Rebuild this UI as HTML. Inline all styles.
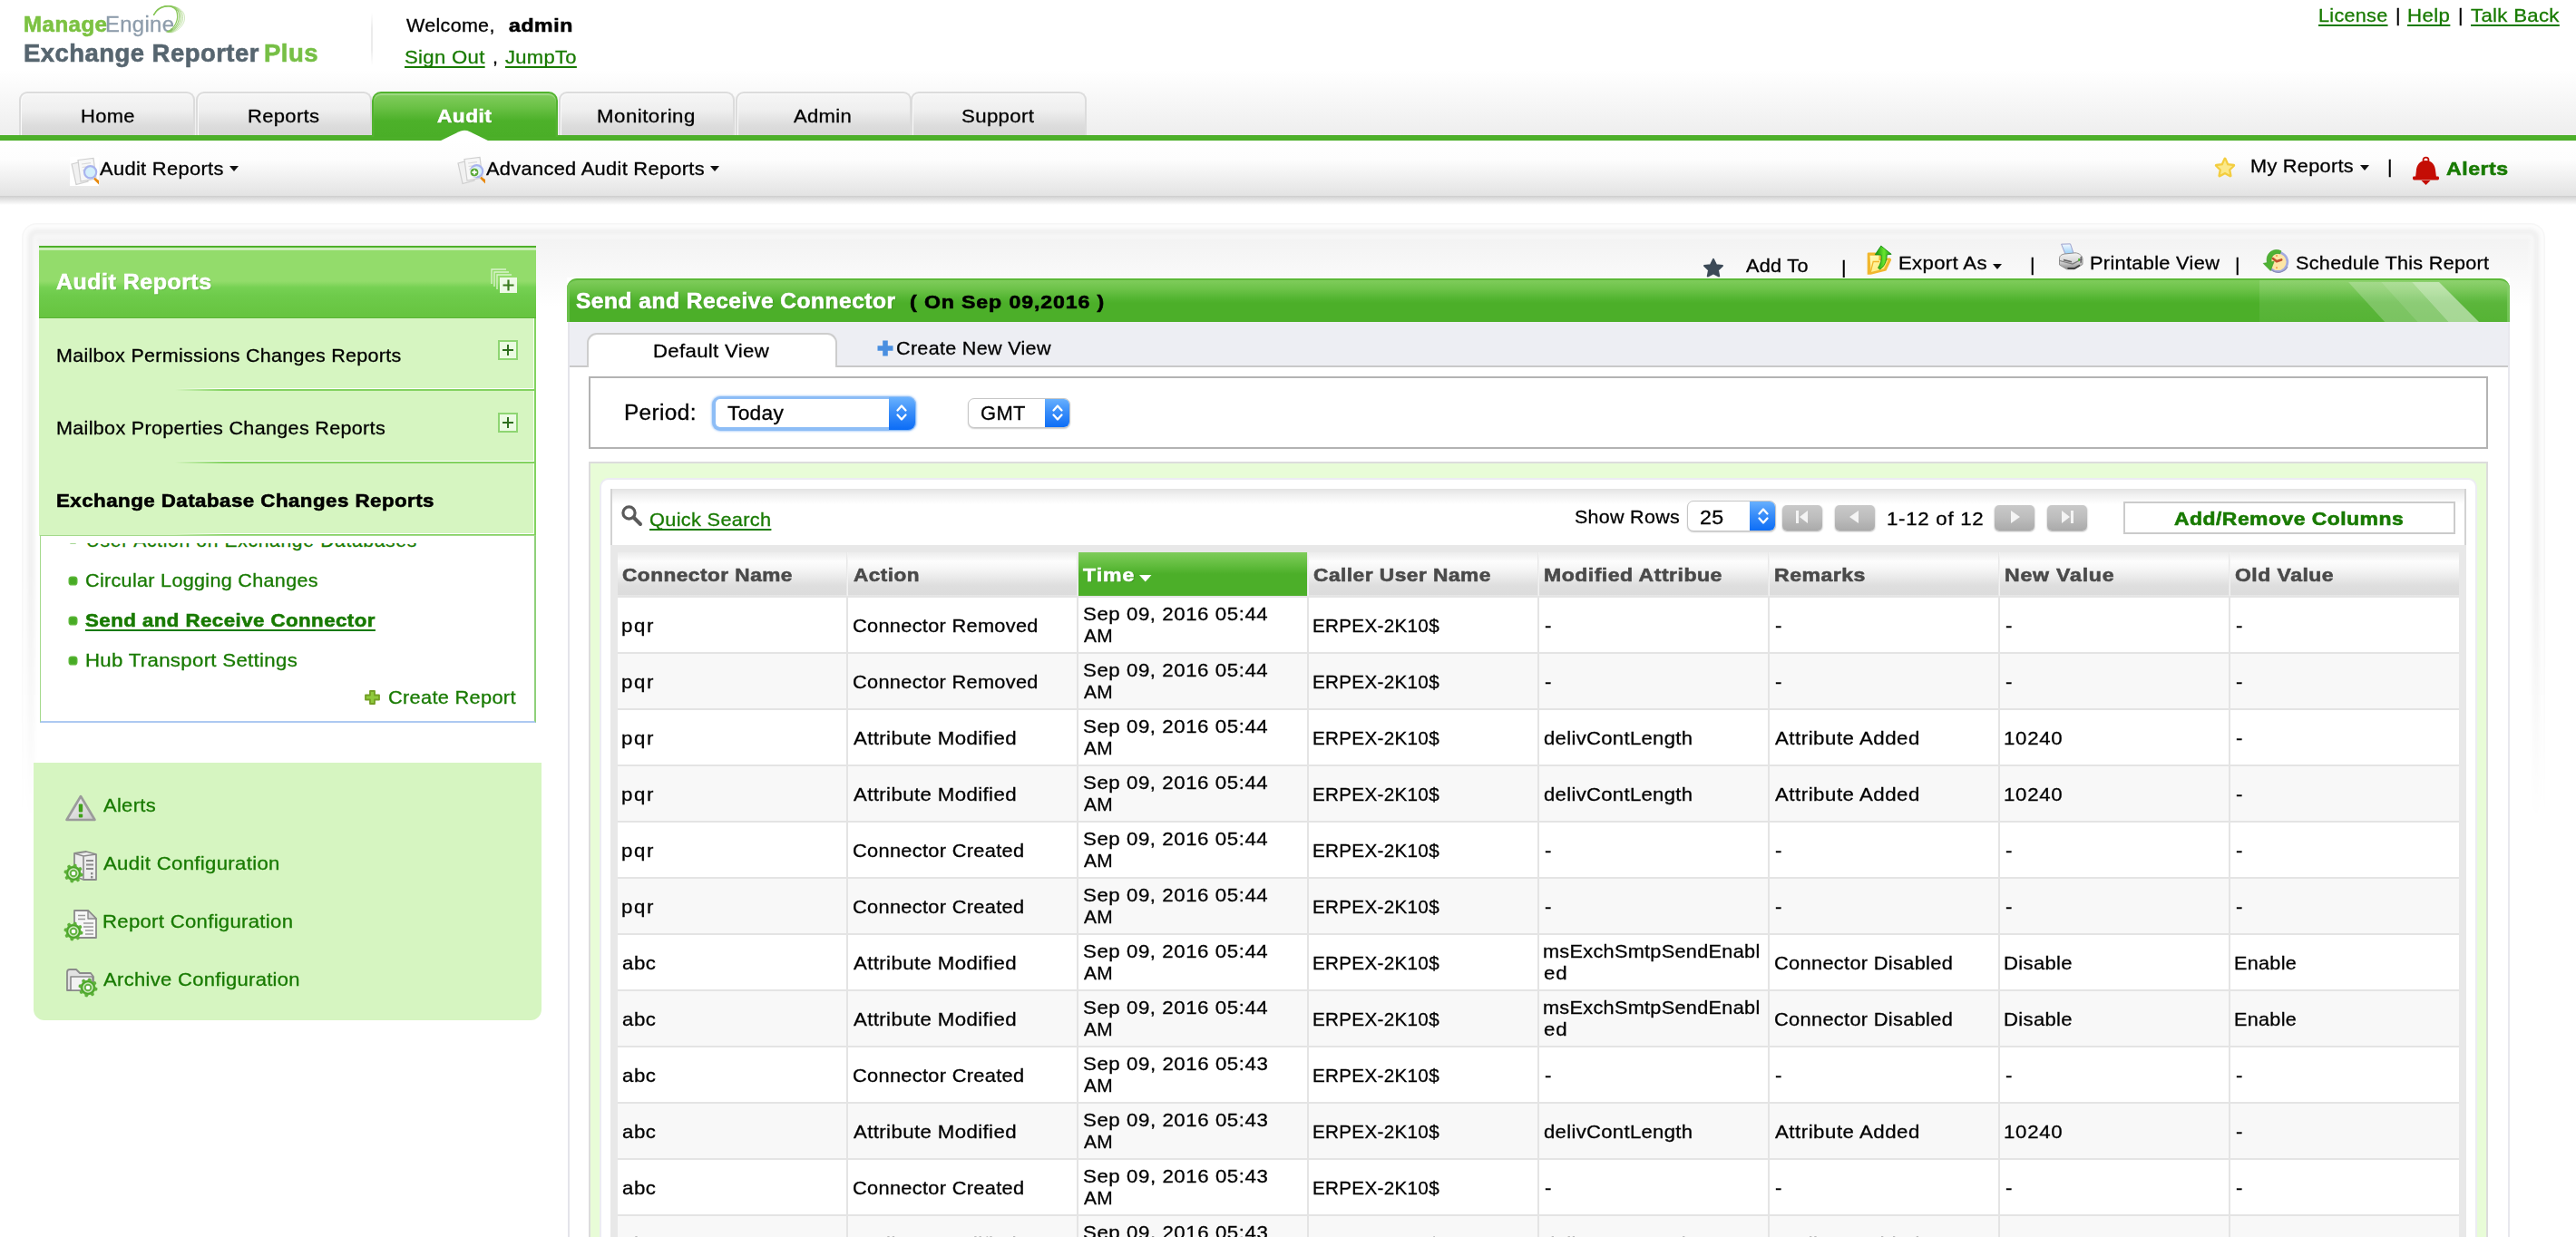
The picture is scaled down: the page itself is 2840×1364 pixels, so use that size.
<!DOCTYPE html>
<html><head><meta charset="utf-8"><title>Exchange Reporter Plus</title>
<style>
html,body{margin:0;padding:0;background:#fff;}
body{width:2840px;height:1364px;overflow:hidden;position:relative;font-family:"Liberation Sans",sans-serif;color:#000;}
.t{position:absolute;white-space:nowrap;transform-origin:0 50%;-webkit-text-stroke:0.3px;}
.b{position:absolute;box-sizing:border-box;}
.g{color:#187a00;}
.u{text-decoration:underline;text-decoration-thickness:2px;text-underline-offset:3px;text-decoration-skip-ink:none;}
svg{position:absolute;overflow:visible;}

.tab{position:absolute;top:101px;height:48px;box-sizing:border-box;border:2px solid #dcdcdc;border-bottom:none;border-radius:9px 9px 0 0;
 background:linear-gradient(#f6f6f6 0%,#efefef 40%,#dcdcdc 78%,#d7d7d7 100%);box-shadow:inset 1px 1px 0 #fafafa;}

</style></head><body>
<div class="b " style="left:0px;top:0px;width:2840px;height:149px;background:linear-gradient(#fff 0%,#fff 52%,#eeeeee 100%);"></div>
<div style="position:absolute;left:0;top:0;filter:blur(0.7px);">
<div class="t " style="left:25.8px;top:16.0px;font-size:23px;line-height:23px;letter-spacing:0.45px;transform:scaleX(1.0468);font-weight:bold;-webkit-text-stroke:0.6px;color:#7cc242;">Manage</div>
<div class="t " style="left:115.6px;top:16.0px;font-size:23px;line-height:23px;letter-spacing:0.30px;transform:scaleX(1.0391);color:#8d9cab;">Engine</div>
<div class="t " style="left:25.6px;top:46.0px;font-size:27px;line-height:27px;letter-spacing:0.45px;transform:scaleX(1.0180);font-weight:bold;-webkit-text-stroke:0.6px;color:#56656f;">Exchange Reporter</div>
<div class="t " style="left:291.3px;top:46.0px;font-size:27px;line-height:27px;letter-spacing:0.45px;transform:scaleX(1.0198);font-weight:bold;-webkit-text-stroke:0.6px;color:#76bf45;">Plus</div>
<svg style="left:165px;top:2px" width="46" height="38" viewBox="0 0 46 38"><g fill="none" stroke="#86c556" stroke-linecap="round"><path d="M4.5 14.5 C10 3.5 23.0 1.5 29.5 9.5 C33.0 19.0 28.0 30.0 19.0 33.2" stroke-width="1.30" opacity="0.95"/><path d="M4.5 14.5 C10 3.5 24.6 1.3 31.4 10.1 C35.2 19.5 29.6 30.4 20.2 33.4" stroke-width="1.18" opacity="0.83"/><path d="M4.5 14.5 C10 3.5 26.2 1.1 33.3 10.7 C37.4 20.0 31.2 30.8 21.4 33.6" stroke-width="1.06" opacity="0.71"/><path d="M4.5 14.5 C10 3.5 27.8 0.9 35.2 11.3 C39.6 20.5 32.8 31.2 22.6 33.8" stroke-width="0.94" opacity="0.59"/><path d="M4.5 14.5 C10 3.5 29.4 0.7 37.1 11.9 C41.8 21.0 34.4 31.6 23.8 34.0" stroke-width="0.82" opacity="0.47"/></g></svg>
</div>
<div class="b " style="left:409px;top:14px;width:2px;height:58px;background:linear-gradient(#fff,#ececec 30%,#ececec 70%,#fff);"></div>
<div class="t " style="left:448.4px;top:16.5px;font-size:21px;line-height:21px;letter-spacing:0.30px;transform:scaleX(1.0241);">Welcome,</div>
<div class="t " style="left:560.6px;top:16.5px;font-size:21px;line-height:21px;letter-spacing:0.52px;transform:scaleX(1.1000);font-weight:bold;-webkit-text-stroke:0.6px;">admin</div>
<div class="t u" style="left:446.3px;top:52.0px;font-size:21px;line-height:21px;letter-spacing:0.30px;transform:scaleX(1.0537);color:#187a00;">Sign Out</div>
<div class="t " style="left:542.9px;top:52.0px;font-size:21px;line-height:21px;letter-spacing:0.30px;transform:scaleX(1.0250);color:#000;">,</div>
<div class="t u" style="left:556.9px;top:52.0px;font-size:21px;line-height:21px;letter-spacing:0.30px;transform:scaleX(1.0468);color:#187a00;">JumpTo</div>
<div class="t u" style="left:2556.1px;top:6.4px;font-size:21px;line-height:21px;letter-spacing:0.30px;transform:scaleX(1.0273);color:#187a00;">License</div>
<div class="t " style="left:2640.9px;top:6.4px;font-size:21px;line-height:21px;letter-spacing:0.30px;transform:scaleX(1.0250);">|</div>
<div class="t u" style="left:2654.2px;top:6.4px;font-size:21px;line-height:21px;letter-spacing:0.37px;transform:scaleX(1.0600);color:#187a00;">Help</div>
<div class="t " style="left:2709.8px;top:6.4px;font-size:21px;line-height:21px;letter-spacing:0.30px;transform:scaleX(1.0250);">|</div>
<div class="t u" style="left:2724.1px;top:6.4px;font-size:21px;line-height:21px;letter-spacing:0.30px;transform:scaleX(1.0562);color:#187a00;">Talk Back</div>
<div class="tab" style="left:21px;width:194px"></div>
<div class="t " style="left:88.6px;top:116.8px;font-size:21px;line-height:21px;letter-spacing:0.30px;transform:scaleX(1.0452);">Home</div>
<div class="tab" style="left:215.5px;width:194px"></div>
<div class="t " style="left:272.6px;top:116.8px;font-size:21px;line-height:21px;letter-spacing:0.30px;transform:scaleX(1.0481);">Reports</div>
<div class="tab" style="left:616px;width:194px"></div>
<div class="t " style="left:658.3px;top:116.8px;font-size:21px;line-height:21px;letter-spacing:0.46px;transform:scaleX(1.0600);">Monitoring</div>
<div class="tab" style="left:810.5px;width:194px"></div>
<div class="t " style="left:875.2px;top:116.8px;font-size:21px;line-height:21px;letter-spacing:0.30px;transform:scaleX(1.0507);">Admin</div>
<div class="tab" style="left:1004px;width:194px"></div>
<div class="t " style="left:1059.9px;top:116.8px;font-size:21px;line-height:21px;letter-spacing:0.32px;transform:scaleX(1.0600);">Support</div>
<div class="b " style="left:0px;top:149px;width:2840px;height:6px;background:#4caf29;"></div>
<div class="b" style="left:410px;top:101px;width:205px;height:50px;border-radius:10px 10px 0 0;background:linear-gradient(#82cd5e 0%,#6cc247 30%,#4db12a 62%,#4aae27 100%);border:2px solid #52b32f;border-bottom:none;box-shadow:inset 0 2px 1px rgba(255,255,255,.25);"></div>
<div class="t " style="left:482.4px;top:116.8px;font-size:21px;line-height:21px;letter-spacing:0.45px;transform:scaleX(1.0785);font-weight:bold;-webkit-text-stroke:0.6px;color:#fff;text-shadow:0 1px 1px rgba(40,110,10,.6);">Audit</div>
<svg style="left:484px;top:143px" width="56" height="13" viewBox="0 0 56 13"><path d="M0 13 L22 2.2 Q28 -0.5 34 2.2 L56 13 Z" fill="#fff"/></svg>
<div class="b " style="left:0px;top:155px;width:2840px;height:61px;background:linear-gradient(#fff 0%,#fdfdfd 35%,#ededed 75%,#e3e3e3 100%);"></div>
<div class="b " style="left:0px;top:216px;width:2840px;height:10px;background:linear-gradient(#cdcdcd 0%,#dedede 30%,#f1f1f1 70%,#fff 100%);"></div>
<svg style="left:77px;top:173px" width="32" height="32" viewBox="0 0 32 32"><rect width="32" height="32" fill="#fff"/><g stroke="#cfcfcf" stroke-width="1.2" fill="#f1f1f1"><path d="M2 8 L15 4.5 L20 27 L7 30.5 Z"/><path d="M9 3.5 L26 1.5 L29 24 L12 27 Z" fill="#f7f7f7"/></g><g stroke="#d9d9d9" stroke-width="1.2"><path d="M13 8 L23 6.7"/><path d="M13.6 11.5 L22 10.4"/><path d="M14 15 L20 14.2"/></g><path d="M27 22.5 L32 26 L32 30.5 L26.5 25 Z" fill="#e8890c"/><circle cx="22.6" cy="16.8" r="6.6" fill="#d3effb" stroke="#a9b4ee" stroke-width="2.2"/></svg>
<div class="t " style="left:109.8px;top:174.5px;font-size:21px;line-height:21px;letter-spacing:0.30px;transform:scaleX(1.0423);">Audit Reports</div>
<svg style="left:253.3px;top:182.8px" width="10" height="6" viewBox="0 0 10 6"><path d="M0 0 H10 L5.0 6 Z" fill="#111"/></svg>
<svg style="left:503px;top:172px" width="32" height="32" viewBox="0 0 32 32"><g stroke="#cfcfcf" stroke-width="1.2" fill="#f1f1f1"><path d="M2 8 L15 4.5 L20 27 L7 30.5 Z"/><path d="M9 3.5 L26 1.5 L29 24 L12 27 Z" fill="#f7f7f7"/></g><g stroke="#d9d9d9" stroke-width="1.2"><path d="M13 8 L23 6.7"/><path d="M13.6 11.5 L22 10.4"/><path d="M14 15 L20 14.2"/></g><path d="M27 22.5 L32 26 L32 30.5 L26.5 25 Z" fill="#e8890c"/><circle cx="22.6" cy="16.8" r="6.6" fill="#d3effb" stroke="#a9b4ee" stroke-width="2.2"/><circle cx="20" cy="18" r="5" fill="#5aa83a" stroke="#fff" stroke-width="1"/><path d="M17.4 18 H22.6 M20 15.4 V20.6" stroke="#fff" stroke-width="1.8"/></svg>
<div class="t " style="left:536.2px;top:174.5px;font-size:21px;line-height:21px;letter-spacing:0.30px;transform:scaleX(1.0390);">Advanced Audit Reports</div>
<svg style="left:783px;top:182.8px" width="10" height="6" viewBox="0 0 10 6"><path d="M0 0 H10 L5.0 6 Z" fill="#111"/></svg>
<svg style="left:2440px;top:172px" width="26" height="25" viewBox="0 0 26 25"><path d="M13 3.2 L15.9 9.6 L22.6 10.4 L17.7 15.1 L19 21.8 L13 18.5 L7 21.8 L8.3 15.1 L3.4 10.4 L10.1 9.6 Z" fill="#fbe67e" stroke="#f3cd3f" stroke-width="3.2" stroke-linejoin="round"/><path d="M13 4.6 L15.4 10.3 L21.2 11 L17 15 L18 20.5 L13 17.7 L8 20.5 L9 15 L4.8 11 L10.6 10.3 Z" fill="#fbe98a"/></svg>
<div class="t " style="left:2480.6px;top:172.4px;font-size:21px;line-height:21px;letter-spacing:0.30px;transform:scaleX(1.0330);">My Reports</div>
<svg style="left:2601.6px;top:181.8px" width="10" height="6" viewBox="0 0 10 6"><path d="M0 0 H10 L5.0 6 Z" fill="#111"/></svg>
<div class="t " style="left:2631.6px;top:173.0px;font-size:21px;line-height:21px;letter-spacing:0.30px;transform:scaleX(1.0250);">|</div>
<svg style="left:2659px;top:172px" width="31" height="33" viewBox="0 0 31 33"><g fill="#c40d05"><circle cx="15.5" cy="4.6" r="3" fill="none" stroke="#c40d05" stroke-width="1.8"/><path d="M15.5 5 C8.5 5 5.2 10 4.8 17 L4 23.5 H27 L26.2 17 C25.8 10 22.5 5 15.5 5 Z"/><rect x="1" y="22.6" width="29" height="3.8" rx="1.4"/><path d="M10.5 27 H20.5 L15.5 32 Z"/></g></svg>
<div class="t " style="left:2696.8px;top:174.6px;font-size:21px;line-height:21px;letter-spacing:0.49px;transform:scaleX(1.1000);font-weight:bold;-webkit-text-stroke:0.6px;color:#187a00;">Alerts</div>
<div class="b" style="left:24px;top:246px;width:2782px;height:1150px;border-radius:16px;background:linear-gradient(#f1f1f1 0,#f2f2f2 12px,#f8f8f8 50px,#fff 92px);box-shadow:inset 0 0 0 1.5px #f6f6f6,inset 0 0 4px 7px #fcfcfc,inset 0 0 4px 12px #eeeeee,inset 0 0 4px 16px #f9f9f9,0 0 3px 1px #f8f8f8;-webkit-mask-image:linear-gradient(#000 0,#000 380px,transparent 660px);mask-image:linear-gradient(#000 0,#000 380px,transparent 660px);"></div>
<div class="b " style="left:43px;top:271px;width:548px;height:80px;background:linear-gradient(#4eb02a 0,#4eb02a 2px,#cdeebb 2px,#cdeebb 4.5px,#93dc6b 5.5px,#93dc6b 39px,#76d153 46px,#6ecb4b 55px,#66c43f 79px,#5ab535 79px,#5ab535 80px);"></div>
<div class="t " style="left:62.1px;top:299.8px;font-size:23px;line-height:23px;letter-spacing:0.45px;transform:scaleX(1.0866);font-weight:bold;-webkit-text-stroke:0.6px;color:#fff;text-shadow:1px 1px 1px #5fae3e;">Audit Reports</div>
<svg style="left:541px;top:296px" width="30" height="28" viewBox="0 0 30 28"><g fill="none" stroke="#d9f3cb" stroke-width="1.4"><path d="M1 17 V1 H17"/><path d="M4 20 V4 H20"/><path d="M7 23 V7 H23"/></g><rect x="10" y="10" width="19" height="17" fill="#eefae6"/><path d="M13.5 18.5 H25.5 M19.5 12.5 V24.5" stroke="#3a7a1e" stroke-width="2.2"/></svg>
<div class="b " style="left:43px;top:351px;width:548px;height:240px;background:#d6f5c1;border-right:2.5px solid #82d25f;"></div>
<div class="b " style="left:587.5px;top:351px;width:1px;height:237px;background:#f4fff0;"></div>
<div class="b " style="left:43px;top:427.5px;width:546px;height:1.5px;background:linear-gradient(90deg,rgba(255,255,255,0) 150px,#fff 205px,#fff 100%);"></div>
<div class="b " style="left:43px;top:429.0px;width:548px;height:1.5px;background:linear-gradient(90deg,rgba(130,210,95,0) 150px,#82d25f 205px,#82d25f 100%);"></div>
<div class="b " style="left:43px;top:507.5px;width:546px;height:1.5px;background:linear-gradient(90deg,rgba(255,255,255,0) 150px,#fff 205px,#fff 100%);"></div>
<div class="b " style="left:43px;top:509.0px;width:548px;height:1.5px;background:linear-gradient(90deg,rgba(130,210,95,0) 150px,#82d25f 205px,#82d25f 100%);"></div>
<div class="b " style="left:43px;top:587.5px;width:546px;height:1.5px;background:linear-gradient(90deg,rgba(255,255,255,0) 150px,#fff 205px,#fff 100%);"></div>
<div class="b " style="left:43px;top:589.0px;width:548px;height:1.5px;background:linear-gradient(90deg,rgba(130,210,95,0) 150px,#82d25f 205px,#82d25f 100%);"></div>
<div class="t " style="left:61.8px;top:380.8px;font-size:21px;line-height:21px;letter-spacing:0.30px;transform:scaleX(1.0223);">Mailbox Permissions Changes Reports</div>
<svg style="left:549px;top:375px" width="22" height="22" viewBox="0 0 22 22"><rect x="1" y="1" width="20" height="20" fill="#ebfbe2" stroke="#8ed572" stroke-width="2"/><path d="M5 11 H17 M11 5 V17" stroke="#2d6e1e" stroke-width="2"/></svg>
<div class="t " style="left:61.8px;top:460.6px;font-size:21px;line-height:21px;letter-spacing:0.30px;transform:scaleX(1.0272);">Mailbox Properties Changes Reports</div>
<svg style="left:549px;top:455px" width="22" height="22" viewBox="0 0 22 22"><rect x="1" y="1" width="20" height="20" fill="#ebfbe2" stroke="#8ed572" stroke-width="2"/><path d="M5 11 H17 M11 5 V17" stroke="#2d6e1e" stroke-width="2"/></svg>
<div class="t " style="left:62.4px;top:540.7px;font-size:21px;line-height:21px;letter-spacing:0.45px;transform:scaleX(1.0611);font-weight:bold;-webkit-text-stroke:0.6px;">Exchange Database Changes Reports</div>
<div class="b " style="left:44px;top:590px;width:547px;height:207px;background:#fff;border:1px solid #a3d98b;border-right:2px solid #8fd07a;border-bottom:2px solid #adc9f1;overflow:hidden;"></div>
<div class="b" style="left:45px;top:598.5px;width:545px;height:14px;overflow:hidden;">
<div class="t" style="left:49.7px;top:-13.6px;font-size:21px;line-height:21px;letter-spacing:0.7px;color:#187a00">User Action on Exchange Databases</div>
<svg style="left:30px;top:-9.5px" width="11" height="11" viewBox="0 0 11 11"><rect x=".5" y=".5" width="10" height="10" rx="3.5" fill="#4fb02c"/></svg>
</div>
<svg style="left:74.6px;top:634.6px" width="11" height="11" viewBox="0 0 11 11"><rect x=".5" y=".5" width="10" height="10" rx="3.6" fill="#5bb638"/><rect x="2" y="2" width="7" height="7" rx="2.6" fill="#48ab25"/></svg>
<div class="t " style="left:94.3px;top:628.8px;font-size:21px;line-height:21px;letter-spacing:0.30px;transform:scaleX(1.0274);color:#187a00;">Circular Logging Changes</div>
<svg style="left:74.6px;top:679.1px" width="11" height="11" viewBox="0 0 11 11"><rect x=".5" y=".5" width="10" height="10" rx="3.6" fill="#5bb638"/><rect x="2" y="2" width="7" height="7" rx="2.6" fill="#48ab25"/></svg>
<div class="t u" style="left:94.3px;top:672.8px;font-size:21px;line-height:21px;letter-spacing:0.45px;transform:scaleX(1.0583);font-weight:bold;-webkit-text-stroke:0.6px;color:#187a00;">Send and Receive Connector</div>
<svg style="left:74.6px;top:722.9px" width="11" height="11" viewBox="0 0 11 11"><rect x=".5" y=".5" width="10" height="10" rx="3.6" fill="#5bb638"/><rect x="2" y="2" width="7" height="7" rx="2.6" fill="#48ab25"/></svg>
<div class="t " style="left:94.3px;top:716.8px;font-size:21px;line-height:21px;letter-spacing:0.30px;transform:scaleX(1.0574);color:#187a00;">Hub Transport Settings</div>
<svg style="left:402px;top:761px" width="17" height="16" viewBox="0 0 17 16"><path d="M6 1 H11 V5.5 H16 V10.5 H11 V15 H6 V10.5 H1 V5.5 H6 Z" fill="#8fc93c" stroke="#739f24" stroke-width="1.8" stroke-linejoin="round"/></svg>
<div class="t " style="left:427.7px;top:758.0px;font-size:21px;line-height:21px;letter-spacing:0.30px;transform:scaleX(1.0368);color:#187a00;">Create Report</div>
<div class="b " style="left:37px;top:841px;width:560px;height:284px;background:#d6f5c1;border-radius:0 0 12px 12px;"></div>
<div class="t " style="left:113.8px;top:876.7px;font-size:21px;line-height:21px;letter-spacing:0.30px;transform:scaleX(1.0440);color:#187a00;">Alerts</div>
<div class="t " style="left:113.8px;top:940.9px;font-size:21px;line-height:21px;letter-spacing:0.30px;transform:scaleX(1.0567);color:#187a00;">Audit Configuration</div>
<div class="t " style="left:112.9px;top:1004.9px;font-size:21px;line-height:21px;letter-spacing:0.30px;transform:scaleX(1.0525);color:#187a00;">Report Configuration</div>
<div class="t " style="left:113.8px;top:1068.8px;font-size:21px;line-height:21px;letter-spacing:0.30px;transform:scaleX(1.0475);color:#187a00;">Archive Configuration</div>
<svg style="left:1876px;top:283px" width="26" height="24" viewBox="0 0 26 24"><path d="M13 1 L16.7 8.6 L25 9.7 L19 15.5 L20.5 23.5 L13 19.6 L5.5 23.5 L7 15.5 L1 9.7 L9.3 8.6 Z" fill="#3c4a57" stroke="#3c4a57" stroke-width="2.4" stroke-linejoin="round" transform="translate(2.2 2) scale(.83)"/></svg>
<div class="t " style="left:1924.9px;top:282.4px;font-size:21px;line-height:21px;letter-spacing:0.30px;transform:scaleX(1.0305);">Add To</div>
<div class="t " style="left:2030.1px;top:284.0px;font-size:21px;line-height:21px;letter-spacing:0.30px;transform:scaleX(1.0250);">|</div>
<div class="t " style="left:2092.6px;top:279.2px;font-size:21px;line-height:21px;letter-spacing:0.30px;transform:scaleX(1.0567);">Export As</div>
<svg style="left:2197px;top:291px" width="10" height="6" viewBox="0 0 10 6"><path d="M0 0 H10 L5.0 6 Z" fill="#111"/></svg>
<div class="t " style="left:2238.1px;top:280.5px;font-size:21px;line-height:21px;letter-spacing:0.30px;transform:scaleX(1.0250);">|</div>
<div class="t " style="left:2304.4px;top:279.0px;font-size:21px;line-height:21px;letter-spacing:0.30px;transform:scaleX(1.0371);">Printable View</div>
<div class="t " style="left:2463.6px;top:280.5px;font-size:21px;line-height:21px;letter-spacing:0.30px;transform:scaleX(1.0250);">|</div>
<div class="t " style="left:2531.0px;top:278.8px;font-size:21px;line-height:21px;letter-spacing:0.30px;transform:scaleX(1.0281);">Schedule This Report</div>
<svg style="left:2050px;top:262px;filter:blur(.45px)" width="50" height="50" viewBox="0 0 50 50"><defs><linearGradient id="ga" x1="0" y1="0" x2="1" y2="0"><stop offset="0" stop-color="#0c8f0c"/><stop offset=".55" stop-color="#69e52e"/><stop offset="1" stop-color="#149314"/></linearGradient><linearGradient id="fy" x1="0" y1="0" x2="1" y2="1"><stop offset="0" stop-color="#fffcc0"/><stop offset="1" stop-color="#ffe45e"/></linearGradient></defs><path d="M8.7 17.5 Q8.7 16.5 10 16.5 H17.5 L19.5 19.5 H24 V22.5 H34 L35.2 24.5 L29.5 36.5 L12.5 40.8 H8.7 Z" fill="#f1b72d"/><path d="M11.6 19.8 H21.5 V25 H31.5 L27 34.5 L12.6 38 Z" fill="url(#fy)"/><path d="M12.3 38.2 L15.2 26.5 H22" fill="none" stroke="#f1b72d" stroke-width="1.3"/><path d="M23.8 9.1 L35.2 18.3 L30.2 18.8 C30.4 26 27.2 32 22.6 35 L20.6 33.4 C23.6 29 24.6 24 24.1 19.2 L17.3 18.7 Z" fill="url(#ga)" stroke="#0b860b" stroke-width=".8" stroke-linejoin="round"/></svg>
<svg style="left:2260px;top:258px;filter:blur(.45px)" width="50" height="50" viewBox="0 0 50 50"><defs><linearGradient id="pp" x1="0" y1="0" x2="0" y2="1"><stop offset="0" stop-color="#f4f9ff"/><stop offset="1" stop-color="#8ccaf7"/></linearGradient><linearGradient id="pb" x1="0" y1="0" x2="0" y2="1"><stop offset="0" stop-color="#f4f4f4"/><stop offset=".55" stop-color="#d4d4d4"/><stop offset="1" stop-color="#8a8a8a"/></linearGradient></defs><path d="M12.6 11.2 L22.5 10.9 L26.5 22.5 L17.5 23.5 Z" fill="url(#pp)" stroke="#9aa0cc" stroke-width="1"/><path d="M10.5 26.5 C10.5 24 13 22.5 16 22 L28 20.8 C32 21 36 24 36 27.5 V33.5 L27 38.8 L18.5 38.8 L10.5 34 Z" fill="url(#pb)" stroke="#8f8f8f" stroke-width="1"/><path d="M10.8 29.5 L25 33 L35.6 27.6" fill="none" stroke="#7a7a7a" stroke-width="1.2"/><path d="M15 28.6 L24 30.8" stroke="#666" stroke-width="1.6"/><path d="M19.5 38 L27 38 L33 34.5" fill="none" stroke="#3f3f3f" stroke-width="1.8"/><path d="M33.5 25.5 L34.8 24.8 L34.8 31.5 L33.5 32.3 Z" fill="#555"/><rect x="31.2" y="27" width="1.8" height="3" fill="#56b13a"/></svg>
<svg style="left:2485px;top:265px;filter:blur(.45px)" width="50" height="50" viewBox="0 0 50 50"><circle cx="26.3" cy="23.8" r="10.6" fill="#fde6a6" stroke="#a4abdf" stroke-width="2.6"/><path d="M19 32.5 A11.8 11.8 0 0 0 37 29" fill="none" stroke="#8d8fb8" stroke-width="1.2"/><path d="M25 23.2 L20.8 20 M25 23.2 L30.2 21.4" stroke="#c2502c" stroke-width="2.6" stroke-linecap="round"/><circle cx="25" cy="17" r="1" fill="#f39a3c"/><circle cx="25" cy="30.2" r="1" fill="#f39a3c"/><path d="M30 11.8 C24 8.5 16.5 11.5 14.6 18 C13.9 20.5 14 22.6 14.5 24.6 L10.2 25.4 L18.2 33.6 L22.2 23.2 L19.2 23.8 C18.6 19.8 20 16.6 23 15.2 C25 14.3 27 14.3 28.6 15 Z" fill="#4fb233" stroke="#3a9a22" stroke-width=".6"/></svg>
<div class="b " style="left:625px;top:306px;width:2142px;height:50px;background:#fff;"></div>
<div class="b " style="left:625px;top:307px;width:2142px;height:48px;background:linear-gradient(#7fcc5b 0%,#6cc248 22%,#55b633 42%,#4caf29 55%,#4caf29 100%);border-radius:11px 11px 0 0;border-top:2px solid #5cb838;box-shadow:inset 3px 0 0 rgba(120,200,90,.7),inset -3px 0 0 rgba(120,200,90,.7);overflow:hidden;"><div style="position:absolute;left:1866px;top:0;width:276px;height:48px;background:linear-gradient(rgba(255,255,255,.12),rgba(255,255,255,.05));"></div><svg style="left:1964px;top:2px" width="170" height="46" viewBox="0 0 170 46"><path d="M0 0 H36 L78 46 H42 Z" fill="rgba(255,255,255,.22)"/><path d="M36 0 H70 L112 46 H78 Z" fill="rgba(255,255,255,.30)"/><path d="M70 0 H100 L146 46 H112 Z" fill="rgba(255,255,255,.48)"/></svg></div>
<div class="t " style="left:635.4px;top:320.7px;font-size:23px;line-height:23px;letter-spacing:0.45px;transform:scaleX(1.0685);font-weight:bold;-webkit-text-stroke:0.6px;color:#fff;text-shadow:1px 1px 1px #3d8f20;">Send and Receive Connector</div>
<div class="t " style="left:1003.3px;top:321.7px;font-size:21px;line-height:21px;letter-spacing:0.81px;transform:scaleX(1.1000);font-weight:bold;-webkit-text-stroke:0.6px;color:#000;">( On Sep 09,2016 )</div>
<div class="b " style="left:626px;top:355px;width:2141px;height:1100px;background:#fff;border-left:2px solid #e4e4ea;border-right:2px solid #e8e8ee;"></div>
<div class="b " style="left:628px;top:355px;width:2137px;height:50px;background:#edeef3;border-bottom:2px solid #c9c9c9;"></div>
<div class="b " style="left:647px;top:367px;width:276px;height:38px;background:#fff;border:2px solid #cdcdcd;border-bottom:none;border-radius:11px 11px 0 0;"></div>
<div class="t " style="left:719.6px;top:376.3px;font-size:21px;line-height:21px;letter-spacing:0.30px;transform:scaleX(1.0567);">Default View</div>
<svg style="left:967px;top:375px" width="18" height="18" viewBox="0 0 18 18"><path d="M6.2 0.5 H11.8 V6.2 H17.5 V11.8 H11.8 V17.5 H6.2 V11.8 H0.5 V6.2 H6.2 Z" fill="#4a8fe0"/></svg>
<div class="t " style="left:988.0px;top:372.8px;font-size:21px;line-height:21px;letter-spacing:0.30px;transform:scaleX(1.0266);">Create New View</div>
<div class="b " style="left:649px;top:415px;width:2094px;height:80px;background:#fff;border:2px solid #b3b3b3;"></div>
<div class="t " style="left:688.2px;top:443.8px;font-size:23px;line-height:23px;letter-spacing:0.34px;transform:scaleX(1.0600);">Period:</div>
<div class="b " style="left:785.0px;top:436.5px;width:225px;height:38px;background:#8dbdf6;border-radius:9px;box-shadow:0 0 2px 1px rgba(141,189,246,.6);"></div>
<div class="b " style="left:788.5px;top:440px;width:192px;height:31px;background:#fff;border-radius:5px 0 0 5px;"></div>
<div class="b " style="left:979.5px;top:436.5px;width:30.5px;height:38px;background:linear-gradient(#6ab2fe 0%,#3a8ef9 45%,#0b6cf6 100%);border-radius:0 9px 9px 0;border:1.5px solid #8dbdf6;border-left:none;"><svg style="left:7.0px;top:5.5px" width="14" height="24" viewBox="0 0 14 24"><path d="M2.5 9.5 L7 4.5 L11.5 9.5 M2.5 14.5 L7 19.5 L11.5 14.5" fill="none" stroke="#fff" stroke-width="2.3" stroke-linecap="round" stroke-linejoin="round"/></svg></div>
<div class="t " style="left:801.5px;top:444.7px;font-size:22px;line-height:22px;letter-spacing:0.30px;transform:scaleX(1.0328);">Today</div>
<div class="b " style="left:1066.5px;top:438.5px;width:113px;height:33px;background:#fff;border:1px solid #c6c6c6;border-radius:7px;box-shadow:0 1px 1.5px rgba(0,0,0,.2);overflow:hidden;"><div style="position:absolute;right:-1px;top:-1px;width:28px;height:33px;background:linear-gradient(#6ab2fe 0%,#3a8ef9 45%,#0b6cf6 100%);border-radius:0 7px 7px 0;"></div><svg style="right:6.0px;top:3.5px" width="14" height="24" viewBox="0 0 14 24"><path d="M2.5 9.5 L7 4.5 L11.5 9.5 M2.5 14.5 L7 19.5 L11.5 14.5" fill="none" stroke="#fff" stroke-width="2.3" stroke-linecap="round" stroke-linejoin="round"/></svg></div>
<div class="t " style="left:1080.8px;top:444.7px;font-size:22px;line-height:22px;letter-spacing:0.30px;transform:scaleX(0.9979);">GMT</div>
<div class="b " style="left:649px;top:509px;width:2094px;height:900px;background:#e8fcd7;border:2px solid #dcdcdc;"></div>
<div class="b " style="left:661px;top:527px;width:2070px;height:900px;background:#fff;border:2px solid #ececf3;border-radius:10px 10px 0 0;"></div>
<div class="b " style="left:673px;top:539px;width:2046px;height:900px;background:#e8e8e8;"></div>
<div class="b " style="left:673px;top:539px;width:2046px;height:62px;background:linear-gradient(#e3e3e3 0,#f1f1f1 7px,#fff 17px);border:2px solid #d2d2d2;border-bottom:none;border-top:none;"></div>
<svg style="left:684px;top:556px" width="25" height="25" viewBox="0 0 25 25"><circle cx="9.5" cy="9.5" r="6.6" fill="#fff" stroke="#5a5a5a" stroke-width="3.2"/><path d="M14.5 14.5 L22 22" stroke="#5a5a5a" stroke-width="4" stroke-linecap="round"/></svg>
<div class="t u" style="left:715.7px;top:562.3px;font-size:21px;line-height:21px;letter-spacing:0.30px;transform:scaleX(1.0366);color:#187a00;">Quick Search</div>
<div class="t " style="left:1735.8px;top:558.9px;font-size:21px;line-height:21px;letter-spacing:0.30px;transform:scaleX(1.0210);">Show Rows</div>
<div class="b " style="left:1860px;top:552px;width:98px;height:34px;background:#fff;border:1px solid #c6c6c6;border-radius:7px;box-shadow:0 1px 1.5px rgba(0,0,0,.2);overflow:hidden;"><div style="position:absolute;right:-1px;top:-1px;width:29px;height:34px;background:linear-gradient(#6ab2fe 0%,#3a8ef9 45%,#0b6cf6 100%);border-radius:0 7px 7px 0;"></div><svg style="right:6.5px;top:4.0px" width="14" height="24" viewBox="0 0 14 24"><path d="M2.5 9.5 L7 4.5 L11.5 9.5 M2.5 14.5 L7 19.5 L11.5 14.5" fill="none" stroke="#fff" stroke-width="2.3" stroke-linecap="round" stroke-linejoin="round"/></svg></div>
<div class="t " style="left:1874.3px;top:559.5px;font-size:22px;line-height:22px;letter-spacing:0.30px;transform:scaleX(1.0526);">25</div>
<div class="b" style="left:1964.8px;top:557px;width:44px;height:27.5px;border-radius:5px;background:linear-gradient(#c9c9c9,#bdbdbd 50%,#aaaaaa);box-shadow:0 1px 2px rgba(0,0,0,.35);"><svg style="left:12px;top:5px" width="20" height="16" viewBox="0 0 20 16" fill="#f4f4f4"><rect x="3" y="1" width="3" height="14"/><path d="M16 1 V15 L7 8 Z"/></svg></div>
<div class="b" style="left:2022.6px;top:557px;width:44px;height:27.5px;border-radius:5px;background:linear-gradient(#c9c9c9,#bdbdbd 50%,#aaaaaa);box-shadow:0 1px 2px rgba(0,0,0,.35);"><svg style="left:12px;top:5px" width="20" height="16" viewBox="0 0 20 16" fill="#f4f4f4"><path d="M14 1 V15 L4 8 Z"/></svg></div>
<div class="t " style="left:2080.2px;top:561.0px;font-size:21px;line-height:21px;letter-spacing:0.67px;transform:scaleX(1.0600);">1-12 of 12</div>
<div class="b" style="left:2198.6px;top:557px;width:44px;height:27.5px;border-radius:5px;background:linear-gradient(#c9c9c9,#bdbdbd 50%,#aaaaaa);box-shadow:0 1px 2px rgba(0,0,0,.35);"><svg style="left:12px;top:5px" width="20" height="16" viewBox="0 0 20 16" fill="#f4f4f4"><path d="M6 1 V15 L16 8 Z"/></svg></div>
<div class="b" style="left:2256.8px;top:557px;width:44px;height:27.5px;border-radius:5px;background:linear-gradient(#c9c9c9,#bdbdbd 50%,#aaaaaa);box-shadow:0 1px 2px rgba(0,0,0,.35);"><svg style="left:12px;top:5px" width="20" height="16" viewBox="0 0 20 16" fill="#f4f4f4"><rect x="14" y="1" width="3" height="14"/><path d="M4 1 V15 L13 8 Z"/></svg></div>
<div class="b " style="left:2340.5px;top:552.5px;width:366.5px;height:36px;background:#fff;border:2px solid #cbcbcb;"></div>
<div class="t " style="left:2397.4px;top:561.0px;font-size:21px;line-height:21px;letter-spacing:0.45px;transform:scaleX(1.0906);font-weight:bold;-webkit-text-stroke:0.6px;color:#187a00;">Add/Remove Columns</div>
<div class="b " style="left:680.5px;top:609px;width:2030.5px;height:48px;background:linear-gradient(#ececec 0,#fdfdfd 10px,#f4f4f4 20px,#dedede 37px,#dcdcdc 47px,#f1f1f1 48px);"></div>
<div class="t " style="left:686.4px;top:623.0px;font-size:21px;line-height:21px;letter-spacing:0.45px;transform:scaleX(1.0780);font-weight:bold;-webkit-text-stroke:0.6px;color:#4a4a4a;">Connector Name</div>
<div class="b " style="left:933px;top:609px;width:2px;height:48px;background:linear-gradient(90deg,#e4e4e4,#f6f6f6);"></div>
<div class="t " style="left:940.7px;top:623.0px;font-size:21px;line-height:21px;letter-spacing:0.45px;transform:scaleX(1.0722);font-weight:bold;-webkit-text-stroke:0.6px;color:#4a4a4a;">Action</div>
<div class="b " style="left:1187px;top:609px;width:2px;height:48px;background:linear-gradient(90deg,#e4e4e4,#f6f6f6);"></div>
<div class="b " style="left:1189px;top:609px;width:252px;height:48px;background:linear-gradient(#7fcc5b 0%,#66bf42 25%,#4caf29 50%,#4caf29 100%);"></div>
<div class="t " style="left:1193.9px;top:622.8px;font-size:21px;line-height:21px;letter-spacing:0.90px;transform:scaleX(1.1000);font-weight:bold;-webkit-text-stroke:0.6px;color:#fff;text-shadow:1px 1px 1px #3d8f20;">Time</div>
<svg style="left:1255.5px;top:633.6px" width="13.5" height="7.4" viewBox="0 0 13.5 7.4"><path d="M0 0 H13.5 L6.75 7.4 Z" fill="#fff"/></svg>
<div class="b " style="left:1441px;top:609px;width:2px;height:48px;background:linear-gradient(90deg,#e4e4e4,#f6f6f6);"></div>
<div class="t " style="left:1448.4px;top:623.0px;font-size:21px;line-height:21px;letter-spacing:0.45px;transform:scaleX(1.0817);font-weight:bold;-webkit-text-stroke:0.6px;color:#4a4a4a;">Caller User Name</div>
<div class="b " style="left:1695px;top:609px;width:2px;height:48px;background:linear-gradient(90deg,#e4e4e4,#f6f6f6);"></div>
<div class="t " style="left:1701.6px;top:623.0px;font-size:21px;line-height:21px;letter-spacing:0.45px;transform:scaleX(1.0964);font-weight:bold;-webkit-text-stroke:0.6px;color:#4a4a4a;">Modified Attribue</div>
<div class="b " style="left:1949px;top:609px;width:2px;height:48px;background:linear-gradient(90deg,#e4e4e4,#f6f6f6);"></div>
<div class="t " style="left:1955.6px;top:623.0px;font-size:21px;line-height:21px;letter-spacing:0.45px;transform:scaleX(1.0984);font-weight:bold;-webkit-text-stroke:0.6px;color:#4a4a4a;">Remarks</div>
<div class="b " style="left:2203px;top:609px;width:2px;height:48px;background:linear-gradient(90deg,#e4e4e4,#f6f6f6);"></div>
<div class="t " style="left:2209.6px;top:623.0px;font-size:21px;line-height:21px;letter-spacing:0.72px;transform:scaleX(1.1000);font-weight:bold;-webkit-text-stroke:0.6px;color:#4a4a4a;">New Value</div>
<div class="b " style="left:2457px;top:609px;width:2px;height:48px;background:linear-gradient(90deg,#e4e4e4,#f6f6f6);"></div>
<div class="t " style="left:2464.4px;top:623.0px;font-size:21px;line-height:21px;letter-spacing:0.45px;transform:scaleX(1.0935);font-weight:bold;-webkit-text-stroke:0.6px;color:#4a4a4a;">Old Value</div>
<div class="b " style="left:680.5px;top:656.5px;width:2030.5px;height:62px;background:#fff;border-top:2px solid #e4e4e4;"></div>
<div class="b " style="left:933px;top:656.5px;width:2px;height:62px;background:#e4e4e4;"></div>
<div class="b " style="left:1187px;top:656.5px;width:2px;height:62px;background:#e4e4e4;"></div>
<div class="b " style="left:1441px;top:656.5px;width:2px;height:62px;background:#e4e4e4;"></div>
<div class="b " style="left:1695px;top:656.5px;width:2px;height:62px;background:#e4e4e4;"></div>
<div class="b " style="left:1949px;top:656.5px;width:2px;height:62px;background:#e4e4e4;"></div>
<div class="b " style="left:2203px;top:656.5px;width:2px;height:62px;background:#e4e4e4;"></div>
<div class="b " style="left:2457px;top:656.5px;width:2px;height:62px;background:#e4e4e4;"></div>
<div class="t " style="left:685.3px;top:678.5px;font-size:21px;line-height:21px;letter-spacing:1.52px;transform:scaleX(1.0600);color:#000;">pqr</div>
<div class="t " style="left:939.6px;top:678.5px;font-size:21px;line-height:21px;letter-spacing:0.30px;transform:scaleX(1.0356);color:#000;">Connector Removed</div>
<div class="t " style="left:1193.5px;top:665.8px;font-size:21px;line-height:21px;letter-spacing:0.52px;transform:scaleX(1.0600);color:#000;">Sep 09, 2016 05:44</div>
<div class="t " style="left:1194.6px;top:689.8px;font-size:21px;line-height:21px;letter-spacing:0.30px;transform:scaleX(0.9950);color:#000;">AM</div>
<div class="t " style="left:1446.9px;top:678.5px;font-size:21px;line-height:21px;letter-spacing:0.30px;transform:scaleX(0.9839);color:#000;">ERPEX-2K10$</div>
<div class="t " style="left:1702.7px;top:678.5px;font-size:21px;line-height:21px;letter-spacing:2.55px;transform:scaleX(1.0600);color:#000;">-</div>
<div class="t " style="left:1956.7px;top:678.5px;font-size:21px;line-height:21px;letter-spacing:2.55px;transform:scaleX(1.0600);color:#000;">-</div>
<div class="t " style="left:2210.7px;top:678.5px;font-size:21px;line-height:21px;letter-spacing:2.55px;transform:scaleX(1.0600);color:#000;">-</div>
<div class="t " style="left:2464.7px;top:678.5px;font-size:21px;line-height:21px;letter-spacing:2.55px;transform:scaleX(1.0600);color:#000;">-</div>
<div class="b " style="left:680.5px;top:718.5px;width:2030.5px;height:62px;background:#f8f8f8;border-top:2px solid #e4e4e4;"></div>
<div class="b " style="left:933px;top:718.5px;width:2px;height:62px;background:#e4e4e4;"></div>
<div class="b " style="left:1187px;top:718.5px;width:2px;height:62px;background:#e4e4e4;"></div>
<div class="b " style="left:1441px;top:718.5px;width:2px;height:62px;background:#e4e4e4;"></div>
<div class="b " style="left:1695px;top:718.5px;width:2px;height:62px;background:#e4e4e4;"></div>
<div class="b " style="left:1949px;top:718.5px;width:2px;height:62px;background:#e4e4e4;"></div>
<div class="b " style="left:2203px;top:718.5px;width:2px;height:62px;background:#e4e4e4;"></div>
<div class="b " style="left:2457px;top:718.5px;width:2px;height:62px;background:#e4e4e4;"></div>
<div class="t " style="left:685.3px;top:740.5px;font-size:21px;line-height:21px;letter-spacing:1.52px;transform:scaleX(1.0600);color:#000;">pqr</div>
<div class="t " style="left:939.6px;top:740.5px;font-size:21px;line-height:21px;letter-spacing:0.30px;transform:scaleX(1.0356);color:#000;">Connector Removed</div>
<div class="t " style="left:1193.5px;top:727.8px;font-size:21px;line-height:21px;letter-spacing:0.52px;transform:scaleX(1.0600);color:#000;">Sep 09, 2016 05:44</div>
<div class="t " style="left:1194.6px;top:751.8px;font-size:21px;line-height:21px;letter-spacing:0.30px;transform:scaleX(0.9950);color:#000;">AM</div>
<div class="t " style="left:1446.9px;top:740.5px;font-size:21px;line-height:21px;letter-spacing:0.30px;transform:scaleX(0.9839);color:#000;">ERPEX-2K10$</div>
<div class="t " style="left:1702.7px;top:740.5px;font-size:21px;line-height:21px;letter-spacing:2.55px;transform:scaleX(1.0600);color:#000;">-</div>
<div class="t " style="left:1956.7px;top:740.5px;font-size:21px;line-height:21px;letter-spacing:2.55px;transform:scaleX(1.0600);color:#000;">-</div>
<div class="t " style="left:2210.7px;top:740.5px;font-size:21px;line-height:21px;letter-spacing:2.55px;transform:scaleX(1.0600);color:#000;">-</div>
<div class="t " style="left:2464.7px;top:740.5px;font-size:21px;line-height:21px;letter-spacing:2.55px;transform:scaleX(1.0600);color:#000;">-</div>
<div class="b " style="left:680.5px;top:780.5px;width:2030.5px;height:62px;background:#fff;border-top:2px solid #e4e4e4;"></div>
<div class="b " style="left:933px;top:780.5px;width:2px;height:62px;background:#e4e4e4;"></div>
<div class="b " style="left:1187px;top:780.5px;width:2px;height:62px;background:#e4e4e4;"></div>
<div class="b " style="left:1441px;top:780.5px;width:2px;height:62px;background:#e4e4e4;"></div>
<div class="b " style="left:1695px;top:780.5px;width:2px;height:62px;background:#e4e4e4;"></div>
<div class="b " style="left:1949px;top:780.5px;width:2px;height:62px;background:#e4e4e4;"></div>
<div class="b " style="left:2203px;top:780.5px;width:2px;height:62px;background:#e4e4e4;"></div>
<div class="b " style="left:2457px;top:780.5px;width:2px;height:62px;background:#e4e4e4;"></div>
<div class="t " style="left:685.3px;top:802.5px;font-size:21px;line-height:21px;letter-spacing:1.52px;transform:scaleX(1.0600);color:#000;">pqr</div>
<div class="t " style="left:940.6px;top:802.5px;font-size:21px;line-height:21px;letter-spacing:0.35px;transform:scaleX(1.0600);color:#000;">Attribute Modified</div>
<div class="t " style="left:1193.5px;top:789.8px;font-size:21px;line-height:21px;letter-spacing:0.52px;transform:scaleX(1.0600);color:#000;">Sep 09, 2016 05:44</div>
<div class="t " style="left:1194.6px;top:813.8px;font-size:21px;line-height:21px;letter-spacing:0.30px;transform:scaleX(0.9950);color:#000;">AM</div>
<div class="t " style="left:1446.9px;top:802.5px;font-size:21px;line-height:21px;letter-spacing:0.30px;transform:scaleX(0.9839);color:#000;">ERPEX-2K10$</div>
<div class="t " style="left:1701.8px;top:802.5px;font-size:21px;line-height:21px;letter-spacing:0.30px;transform:scaleX(1.0514);color:#000;">delivContLength</div>
<div class="t " style="left:1956.6px;top:802.5px;font-size:21px;line-height:21px;letter-spacing:0.48px;transform:scaleX(1.0600);color:#000;">Attribute Added</div>
<div class="t " style="left:2209.0px;top:802.5px;font-size:21px;line-height:21px;letter-spacing:0.65px;transform:scaleX(1.0600);color:#000;">10240</div>
<div class="t " style="left:2464.7px;top:802.5px;font-size:21px;line-height:21px;letter-spacing:2.55px;transform:scaleX(1.0600);color:#000;">-</div>
<div class="b " style="left:680.5px;top:842.5px;width:2030.5px;height:62px;background:#f8f8f8;border-top:2px solid #e4e4e4;"></div>
<div class="b " style="left:933px;top:842.5px;width:2px;height:62px;background:#e4e4e4;"></div>
<div class="b " style="left:1187px;top:842.5px;width:2px;height:62px;background:#e4e4e4;"></div>
<div class="b " style="left:1441px;top:842.5px;width:2px;height:62px;background:#e4e4e4;"></div>
<div class="b " style="left:1695px;top:842.5px;width:2px;height:62px;background:#e4e4e4;"></div>
<div class="b " style="left:1949px;top:842.5px;width:2px;height:62px;background:#e4e4e4;"></div>
<div class="b " style="left:2203px;top:842.5px;width:2px;height:62px;background:#e4e4e4;"></div>
<div class="b " style="left:2457px;top:842.5px;width:2px;height:62px;background:#e4e4e4;"></div>
<div class="t " style="left:685.3px;top:864.5px;font-size:21px;line-height:21px;letter-spacing:1.52px;transform:scaleX(1.0600);color:#000;">pqr</div>
<div class="t " style="left:940.6px;top:864.5px;font-size:21px;line-height:21px;letter-spacing:0.35px;transform:scaleX(1.0600);color:#000;">Attribute Modified</div>
<div class="t " style="left:1193.5px;top:851.8px;font-size:21px;line-height:21px;letter-spacing:0.52px;transform:scaleX(1.0600);color:#000;">Sep 09, 2016 05:44</div>
<div class="t " style="left:1194.6px;top:875.8px;font-size:21px;line-height:21px;letter-spacing:0.30px;transform:scaleX(0.9950);color:#000;">AM</div>
<div class="t " style="left:1446.9px;top:864.5px;font-size:21px;line-height:21px;letter-spacing:0.30px;transform:scaleX(0.9839);color:#000;">ERPEX-2K10$</div>
<div class="t " style="left:1701.8px;top:864.5px;font-size:21px;line-height:21px;letter-spacing:0.30px;transform:scaleX(1.0514);color:#000;">delivContLength</div>
<div class="t " style="left:1956.6px;top:864.5px;font-size:21px;line-height:21px;letter-spacing:0.48px;transform:scaleX(1.0600);color:#000;">Attribute Added</div>
<div class="t " style="left:2209.0px;top:864.5px;font-size:21px;line-height:21px;letter-spacing:0.65px;transform:scaleX(1.0600);color:#000;">10240</div>
<div class="t " style="left:2464.7px;top:864.5px;font-size:21px;line-height:21px;letter-spacing:2.55px;transform:scaleX(1.0600);color:#000;">-</div>
<div class="b " style="left:680.5px;top:904.5px;width:2030.5px;height:62px;background:#fff;border-top:2px solid #e4e4e4;"></div>
<div class="b " style="left:933px;top:904.5px;width:2px;height:62px;background:#e4e4e4;"></div>
<div class="b " style="left:1187px;top:904.5px;width:2px;height:62px;background:#e4e4e4;"></div>
<div class="b " style="left:1441px;top:904.5px;width:2px;height:62px;background:#e4e4e4;"></div>
<div class="b " style="left:1695px;top:904.5px;width:2px;height:62px;background:#e4e4e4;"></div>
<div class="b " style="left:1949px;top:904.5px;width:2px;height:62px;background:#e4e4e4;"></div>
<div class="b " style="left:2203px;top:904.5px;width:2px;height:62px;background:#e4e4e4;"></div>
<div class="b " style="left:2457px;top:904.5px;width:2px;height:62px;background:#e4e4e4;"></div>
<div class="t " style="left:685.3px;top:926.5px;font-size:21px;line-height:21px;letter-spacing:1.52px;transform:scaleX(1.0600);color:#000;">pqr</div>
<div class="t " style="left:939.6px;top:926.5px;font-size:21px;line-height:21px;letter-spacing:0.30px;transform:scaleX(1.0378);color:#000;">Connector Created</div>
<div class="t " style="left:1193.5px;top:913.8px;font-size:21px;line-height:21px;letter-spacing:0.52px;transform:scaleX(1.0600);color:#000;">Sep 09, 2016 05:44</div>
<div class="t " style="left:1194.6px;top:937.8px;font-size:21px;line-height:21px;letter-spacing:0.30px;transform:scaleX(0.9950);color:#000;">AM</div>
<div class="t " style="left:1446.9px;top:926.5px;font-size:21px;line-height:21px;letter-spacing:0.30px;transform:scaleX(0.9839);color:#000;">ERPEX-2K10$</div>
<div class="t " style="left:1702.7px;top:926.5px;font-size:21px;line-height:21px;letter-spacing:2.55px;transform:scaleX(1.0600);color:#000;">-</div>
<div class="t " style="left:1956.7px;top:926.5px;font-size:21px;line-height:21px;letter-spacing:2.55px;transform:scaleX(1.0600);color:#000;">-</div>
<div class="t " style="left:2210.7px;top:926.5px;font-size:21px;line-height:21px;letter-spacing:2.55px;transform:scaleX(1.0600);color:#000;">-</div>
<div class="t " style="left:2464.7px;top:926.5px;font-size:21px;line-height:21px;letter-spacing:2.55px;transform:scaleX(1.0600);color:#000;">-</div>
<div class="b " style="left:680.5px;top:966.5px;width:2030.5px;height:62px;background:#f8f8f8;border-top:2px solid #e4e4e4;"></div>
<div class="b " style="left:933px;top:966.5px;width:2px;height:62px;background:#e4e4e4;"></div>
<div class="b " style="left:1187px;top:966.5px;width:2px;height:62px;background:#e4e4e4;"></div>
<div class="b " style="left:1441px;top:966.5px;width:2px;height:62px;background:#e4e4e4;"></div>
<div class="b " style="left:1695px;top:966.5px;width:2px;height:62px;background:#e4e4e4;"></div>
<div class="b " style="left:1949px;top:966.5px;width:2px;height:62px;background:#e4e4e4;"></div>
<div class="b " style="left:2203px;top:966.5px;width:2px;height:62px;background:#e4e4e4;"></div>
<div class="b " style="left:2457px;top:966.5px;width:2px;height:62px;background:#e4e4e4;"></div>
<div class="t " style="left:685.3px;top:988.5px;font-size:21px;line-height:21px;letter-spacing:1.52px;transform:scaleX(1.0600);color:#000;">pqr</div>
<div class="t " style="left:939.6px;top:988.5px;font-size:21px;line-height:21px;letter-spacing:0.30px;transform:scaleX(1.0378);color:#000;">Connector Created</div>
<div class="t " style="left:1193.5px;top:975.8px;font-size:21px;line-height:21px;letter-spacing:0.52px;transform:scaleX(1.0600);color:#000;">Sep 09, 2016 05:44</div>
<div class="t " style="left:1194.6px;top:999.8px;font-size:21px;line-height:21px;letter-spacing:0.30px;transform:scaleX(0.9950);color:#000;">AM</div>
<div class="t " style="left:1446.9px;top:988.5px;font-size:21px;line-height:21px;letter-spacing:0.30px;transform:scaleX(0.9839);color:#000;">ERPEX-2K10$</div>
<div class="t " style="left:1702.7px;top:988.5px;font-size:21px;line-height:21px;letter-spacing:2.55px;transform:scaleX(1.0600);color:#000;">-</div>
<div class="t " style="left:1956.7px;top:988.5px;font-size:21px;line-height:21px;letter-spacing:2.55px;transform:scaleX(1.0600);color:#000;">-</div>
<div class="t " style="left:2210.7px;top:988.5px;font-size:21px;line-height:21px;letter-spacing:2.55px;transform:scaleX(1.0600);color:#000;">-</div>
<div class="t " style="left:2464.7px;top:988.5px;font-size:21px;line-height:21px;letter-spacing:2.55px;transform:scaleX(1.0600);color:#000;">-</div>
<div class="b " style="left:680.5px;top:1028.5px;width:2030.5px;height:62px;background:#fff;border-top:2px solid #e4e4e4;"></div>
<div class="b " style="left:933px;top:1028.5px;width:2px;height:62px;background:#e4e4e4;"></div>
<div class="b " style="left:1187px;top:1028.5px;width:2px;height:62px;background:#e4e4e4;"></div>
<div class="b " style="left:1441px;top:1028.5px;width:2px;height:62px;background:#e4e4e4;"></div>
<div class="b " style="left:1695px;top:1028.5px;width:2px;height:62px;background:#e4e4e4;"></div>
<div class="b " style="left:1949px;top:1028.5px;width:2px;height:62px;background:#e4e4e4;"></div>
<div class="b " style="left:2203px;top:1028.5px;width:2px;height:62px;background:#e4e4e4;"></div>
<div class="b " style="left:2457px;top:1028.5px;width:2px;height:62px;background:#e4e4e4;"></div>
<div class="t " style="left:685.8px;top:1050.5px;font-size:21px;line-height:21px;letter-spacing:0.50px;transform:scaleX(1.0600);color:#000;">abc</div>
<div class="t " style="left:940.6px;top:1050.5px;font-size:21px;line-height:21px;letter-spacing:0.35px;transform:scaleX(1.0600);color:#000;">Attribute Modified</div>
<div class="t " style="left:1193.5px;top:1037.8px;font-size:21px;line-height:21px;letter-spacing:0.52px;transform:scaleX(1.0600);color:#000;">Sep 09, 2016 05:44</div>
<div class="t " style="left:1194.6px;top:1061.8px;font-size:21px;line-height:21px;letter-spacing:0.30px;transform:scaleX(0.9950);color:#000;">AM</div>
<div class="t " style="left:1446.9px;top:1050.5px;font-size:21px;line-height:21px;letter-spacing:0.30px;transform:scaleX(0.9839);color:#000;">ERPEX-2K10$</div>
<div class="t " style="left:1701.1px;top:1037.8px;font-size:21px;line-height:21px;letter-spacing:0.30px;transform:scaleX(1.0319);color:#000;">msExchSmtpSendEnabl</div>
<div class="t " style="left:1701.8px;top:1061.8px;font-size:21px;line-height:21px;letter-spacing:0.73px;transform:scaleX(1.0600);color:#000;">ed</div>
<div class="t " style="left:1955.6px;top:1050.5px;font-size:21px;line-height:21px;letter-spacing:0.30px;transform:scaleX(1.0385);color:#000;">Connector Disabled</div>
<div class="t " style="left:2208.8px;top:1050.5px;font-size:21px;line-height:21px;letter-spacing:0.30px;transform:scaleX(1.0529);color:#000;">Disable</div>
<div class="t " style="left:2462.8px;top:1050.5px;font-size:21px;line-height:21px;letter-spacing:0.30px;transform:scaleX(1.0288);color:#000;">Enable</div>
<div class="b " style="left:680.5px;top:1090.5px;width:2030.5px;height:62px;background:#f8f8f8;border-top:2px solid #e4e4e4;"></div>
<div class="b " style="left:933px;top:1090.5px;width:2px;height:62px;background:#e4e4e4;"></div>
<div class="b " style="left:1187px;top:1090.5px;width:2px;height:62px;background:#e4e4e4;"></div>
<div class="b " style="left:1441px;top:1090.5px;width:2px;height:62px;background:#e4e4e4;"></div>
<div class="b " style="left:1695px;top:1090.5px;width:2px;height:62px;background:#e4e4e4;"></div>
<div class="b " style="left:1949px;top:1090.5px;width:2px;height:62px;background:#e4e4e4;"></div>
<div class="b " style="left:2203px;top:1090.5px;width:2px;height:62px;background:#e4e4e4;"></div>
<div class="b " style="left:2457px;top:1090.5px;width:2px;height:62px;background:#e4e4e4;"></div>
<div class="t " style="left:685.8px;top:1112.5px;font-size:21px;line-height:21px;letter-spacing:0.50px;transform:scaleX(1.0600);color:#000;">abc</div>
<div class="t " style="left:940.6px;top:1112.5px;font-size:21px;line-height:21px;letter-spacing:0.35px;transform:scaleX(1.0600);color:#000;">Attribute Modified</div>
<div class="t " style="left:1193.5px;top:1099.8px;font-size:21px;line-height:21px;letter-spacing:0.52px;transform:scaleX(1.0600);color:#000;">Sep 09, 2016 05:44</div>
<div class="t " style="left:1194.6px;top:1123.8px;font-size:21px;line-height:21px;letter-spacing:0.30px;transform:scaleX(0.9950);color:#000;">AM</div>
<div class="t " style="left:1446.9px;top:1112.5px;font-size:21px;line-height:21px;letter-spacing:0.30px;transform:scaleX(0.9839);color:#000;">ERPEX-2K10$</div>
<div class="t " style="left:1701.1px;top:1099.8px;font-size:21px;line-height:21px;letter-spacing:0.30px;transform:scaleX(1.0319);color:#000;">msExchSmtpSendEnabl</div>
<div class="t " style="left:1701.8px;top:1123.8px;font-size:21px;line-height:21px;letter-spacing:0.73px;transform:scaleX(1.0600);color:#000;">ed</div>
<div class="t " style="left:1955.6px;top:1112.5px;font-size:21px;line-height:21px;letter-spacing:0.30px;transform:scaleX(1.0385);color:#000;">Connector Disabled</div>
<div class="t " style="left:2208.8px;top:1112.5px;font-size:21px;line-height:21px;letter-spacing:0.30px;transform:scaleX(1.0529);color:#000;">Disable</div>
<div class="t " style="left:2462.8px;top:1112.5px;font-size:21px;line-height:21px;letter-spacing:0.30px;transform:scaleX(1.0288);color:#000;">Enable</div>
<div class="b " style="left:680.5px;top:1152.5px;width:2030.5px;height:62px;background:#fff;border-top:2px solid #e4e4e4;"></div>
<div class="b " style="left:933px;top:1152.5px;width:2px;height:62px;background:#e4e4e4;"></div>
<div class="b " style="left:1187px;top:1152.5px;width:2px;height:62px;background:#e4e4e4;"></div>
<div class="b " style="left:1441px;top:1152.5px;width:2px;height:62px;background:#e4e4e4;"></div>
<div class="b " style="left:1695px;top:1152.5px;width:2px;height:62px;background:#e4e4e4;"></div>
<div class="b " style="left:1949px;top:1152.5px;width:2px;height:62px;background:#e4e4e4;"></div>
<div class="b " style="left:2203px;top:1152.5px;width:2px;height:62px;background:#e4e4e4;"></div>
<div class="b " style="left:2457px;top:1152.5px;width:2px;height:62px;background:#e4e4e4;"></div>
<div class="t " style="left:685.8px;top:1174.5px;font-size:21px;line-height:21px;letter-spacing:0.50px;transform:scaleX(1.0600);color:#000;">abc</div>
<div class="t " style="left:939.6px;top:1174.5px;font-size:21px;line-height:21px;letter-spacing:0.30px;transform:scaleX(1.0378);color:#000;">Connector Created</div>
<div class="t " style="left:1193.5px;top:1161.8px;font-size:21px;line-height:21px;letter-spacing:0.53px;transform:scaleX(1.0600);color:#000;">Sep 09, 2016 05:43</div>
<div class="t " style="left:1194.6px;top:1185.8px;font-size:21px;line-height:21px;letter-spacing:0.30px;transform:scaleX(0.9950);color:#000;">AM</div>
<div class="t " style="left:1446.9px;top:1174.5px;font-size:21px;line-height:21px;letter-spacing:0.30px;transform:scaleX(0.9839);color:#000;">ERPEX-2K10$</div>
<div class="t " style="left:1702.7px;top:1174.5px;font-size:21px;line-height:21px;letter-spacing:2.55px;transform:scaleX(1.0600);color:#000;">-</div>
<div class="t " style="left:1956.7px;top:1174.5px;font-size:21px;line-height:21px;letter-spacing:2.55px;transform:scaleX(1.0600);color:#000;">-</div>
<div class="t " style="left:2210.7px;top:1174.5px;font-size:21px;line-height:21px;letter-spacing:2.55px;transform:scaleX(1.0600);color:#000;">-</div>
<div class="t " style="left:2464.7px;top:1174.5px;font-size:21px;line-height:21px;letter-spacing:2.55px;transform:scaleX(1.0600);color:#000;">-</div>
<div class="b " style="left:680.5px;top:1214.5px;width:2030.5px;height:62px;background:#f8f8f8;border-top:2px solid #e4e4e4;"></div>
<div class="b " style="left:933px;top:1214.5px;width:2px;height:62px;background:#e4e4e4;"></div>
<div class="b " style="left:1187px;top:1214.5px;width:2px;height:62px;background:#e4e4e4;"></div>
<div class="b " style="left:1441px;top:1214.5px;width:2px;height:62px;background:#e4e4e4;"></div>
<div class="b " style="left:1695px;top:1214.5px;width:2px;height:62px;background:#e4e4e4;"></div>
<div class="b " style="left:1949px;top:1214.5px;width:2px;height:62px;background:#e4e4e4;"></div>
<div class="b " style="left:2203px;top:1214.5px;width:2px;height:62px;background:#e4e4e4;"></div>
<div class="b " style="left:2457px;top:1214.5px;width:2px;height:62px;background:#e4e4e4;"></div>
<div class="t " style="left:685.8px;top:1236.5px;font-size:21px;line-height:21px;letter-spacing:0.50px;transform:scaleX(1.0600);color:#000;">abc</div>
<div class="t " style="left:940.6px;top:1236.5px;font-size:21px;line-height:21px;letter-spacing:0.35px;transform:scaleX(1.0600);color:#000;">Attribute Modified</div>
<div class="t " style="left:1193.5px;top:1223.8px;font-size:21px;line-height:21px;letter-spacing:0.53px;transform:scaleX(1.0600);color:#000;">Sep 09, 2016 05:43</div>
<div class="t " style="left:1194.6px;top:1247.8px;font-size:21px;line-height:21px;letter-spacing:0.30px;transform:scaleX(0.9950);color:#000;">AM</div>
<div class="t " style="left:1446.9px;top:1236.5px;font-size:21px;line-height:21px;letter-spacing:0.30px;transform:scaleX(0.9839);color:#000;">ERPEX-2K10$</div>
<div class="t " style="left:1701.8px;top:1236.5px;font-size:21px;line-height:21px;letter-spacing:0.30px;transform:scaleX(1.0514);color:#000;">delivContLength</div>
<div class="t " style="left:1956.6px;top:1236.5px;font-size:21px;line-height:21px;letter-spacing:0.48px;transform:scaleX(1.0600);color:#000;">Attribute Added</div>
<div class="t " style="left:2209.0px;top:1236.5px;font-size:21px;line-height:21px;letter-spacing:0.65px;transform:scaleX(1.0600);color:#000;">10240</div>
<div class="t " style="left:2464.7px;top:1236.5px;font-size:21px;line-height:21px;letter-spacing:2.55px;transform:scaleX(1.0600);color:#000;">-</div>
<div class="b " style="left:680.5px;top:1276.5px;width:2030.5px;height:62px;background:#fff;border-top:2px solid #e4e4e4;"></div>
<div class="b " style="left:933px;top:1276.5px;width:2px;height:62px;background:#e4e4e4;"></div>
<div class="b " style="left:1187px;top:1276.5px;width:2px;height:62px;background:#e4e4e4;"></div>
<div class="b " style="left:1441px;top:1276.5px;width:2px;height:62px;background:#e4e4e4;"></div>
<div class="b " style="left:1695px;top:1276.5px;width:2px;height:62px;background:#e4e4e4;"></div>
<div class="b " style="left:1949px;top:1276.5px;width:2px;height:62px;background:#e4e4e4;"></div>
<div class="b " style="left:2203px;top:1276.5px;width:2px;height:62px;background:#e4e4e4;"></div>
<div class="b " style="left:2457px;top:1276.5px;width:2px;height:62px;background:#e4e4e4;"></div>
<div class="t " style="left:685.8px;top:1298.5px;font-size:21px;line-height:21px;letter-spacing:0.50px;transform:scaleX(1.0600);color:#000;">abc</div>
<div class="t " style="left:939.6px;top:1298.5px;font-size:21px;line-height:21px;letter-spacing:0.30px;transform:scaleX(1.0378);color:#000;">Connector Created</div>
<div class="t " style="left:1193.5px;top:1285.8px;font-size:21px;line-height:21px;letter-spacing:0.53px;transform:scaleX(1.0600);color:#000;">Sep 09, 2016 05:43</div>
<div class="t " style="left:1194.6px;top:1309.8px;font-size:21px;line-height:21px;letter-spacing:0.30px;transform:scaleX(0.9950);color:#000;">AM</div>
<div class="t " style="left:1446.9px;top:1298.5px;font-size:21px;line-height:21px;letter-spacing:0.30px;transform:scaleX(0.9839);color:#000;">ERPEX-2K10$</div>
<div class="t " style="left:1702.7px;top:1298.5px;font-size:21px;line-height:21px;letter-spacing:2.55px;transform:scaleX(1.0600);color:#000;">-</div>
<div class="t " style="left:1956.7px;top:1298.5px;font-size:21px;line-height:21px;letter-spacing:2.55px;transform:scaleX(1.0600);color:#000;">-</div>
<div class="t " style="left:2210.7px;top:1298.5px;font-size:21px;line-height:21px;letter-spacing:2.55px;transform:scaleX(1.0600);color:#000;">-</div>
<div class="t " style="left:2464.7px;top:1298.5px;font-size:21px;line-height:21px;letter-spacing:2.55px;transform:scaleX(1.0600);color:#000;">-</div>
<div class="b " style="left:680.5px;top:1338.5px;width:2030.5px;height:62px;background:#f8f8f8;border-top:2px solid #e4e4e4;"></div>
<div class="b " style="left:933px;top:1338.5px;width:2px;height:62px;background:#e4e4e4;"></div>
<div class="b " style="left:1187px;top:1338.5px;width:2px;height:62px;background:#e4e4e4;"></div>
<div class="b " style="left:1441px;top:1338.5px;width:2px;height:62px;background:#e4e4e4;"></div>
<div class="b " style="left:1695px;top:1338.5px;width:2px;height:62px;background:#e4e4e4;"></div>
<div class="b " style="left:1949px;top:1338.5px;width:2px;height:62px;background:#e4e4e4;"></div>
<div class="b " style="left:2203px;top:1338.5px;width:2px;height:62px;background:#e4e4e4;"></div>
<div class="b " style="left:2457px;top:1338.5px;width:2px;height:62px;background:#e4e4e4;"></div>
<div class="t " style="left:685.8px;top:1360.5px;font-size:21px;line-height:21px;letter-spacing:0.50px;transform:scaleX(1.0600);color:#000;">abc</div>
<div class="t " style="left:940.6px;top:1360.5px;font-size:21px;line-height:21px;letter-spacing:0.35px;transform:scaleX(1.0600);color:#000;">Attribute Modified</div>
<div class="t " style="left:1193.5px;top:1347.8px;font-size:21px;line-height:21px;letter-spacing:0.53px;transform:scaleX(1.0600);color:#000;">Sep 09, 2016 05:43</div>
<div class="t " style="left:1194.6px;top:1371.8px;font-size:21px;line-height:21px;letter-spacing:0.30px;transform:scaleX(0.9950);color:#000;">AM</div>
<div class="t " style="left:1446.9px;top:1360.5px;font-size:21px;line-height:21px;letter-spacing:0.30px;transform:scaleX(0.9839);color:#000;">ERPEX-2K10$</div>
<div class="t " style="left:1701.8px;top:1360.5px;font-size:21px;line-height:21px;letter-spacing:0.30px;transform:scaleX(1.0514);color:#000;">delivContLength</div>
<div class="t " style="left:1956.6px;top:1360.5px;font-size:21px;line-height:21px;letter-spacing:0.48px;transform:scaleX(1.0600);color:#000;">Attribute Added</div>
<div class="t " style="left:2209.0px;top:1360.5px;font-size:21px;line-height:21px;letter-spacing:0.65px;transform:scaleX(1.0600);color:#000;">10240</div>
<div class="t " style="left:2464.7px;top:1360.5px;font-size:21px;line-height:21px;letter-spacing:2.55px;transform:scaleX(1.0600);color:#000;">-</div>
<svg style="left:70px;top:874px" width="38" height="34" viewBox="0 0 38 34"><defs><linearGradient id="tg" x1="0" y1="0" x2="1" y2="1"><stop offset="0" stop-color="#f4f4f4"/><stop offset="1" stop-color="#c9c9c9"/></linearGradient></defs><path d="M19 4 L34.5 30 H3.5 Z" fill="url(#tg)" stroke="#9b9b9b" stroke-width="2.6" stroke-linejoin="round"/><rect x="16.8" y="12.5" width="4.4" height="9" rx="1" fill="#3fa21a"/><rect x="16.8" y="23.5" width="4.4" height="4" rx="1" fill="#3fa21a"/></svg>
<svg style="left:68px;top:936px" width="42" height="40" viewBox="0 0 42 40"><path d="M14 5 L27 3 L38 6 L38 34 L24 34 L14 30 Z" fill="#ededed" stroke="#8b8b8b" stroke-width="1.8" stroke-linejoin="round"/><path d="M14 5 L24 8 L38 6 M24 8 V34" fill="none" stroke="#8b8b8b" stroke-width="1.6"/><path d="M27 13 H35 M27 17.5 H35 M27 22 H35" stroke="#8b8b8b" stroke-width="1.8"/><rect x="32" y="26" width="2.4" height="2.4" fill="#8b8b8b"/><rect x="32" y="30" width="2.4" height="2.4" fill="#8b8b8b"/><polygon points="23.57,27.81 23.07,30.30 20.38,30.74 19.28,32.38 19.90,35.05 17.79,36.46 15.57,34.86 13.63,35.24 12.19,37.57 9.70,37.07 9.26,34.38 7.62,33.28 4.95,33.90 3.54,31.79 5.14,29.57 4.76,27.63 2.43,26.19 2.93,23.70 5.62,23.26 6.72,21.62 6.10,18.95 8.21,17.54 10.43,19.14 12.37,18.76 13.81,16.43 16.30,16.93 16.74,19.62 18.38,20.72 21.05,20.10 22.46,22.21 20.86,24.43 21.24,26.37" fill="#5db13a"/><circle cx="13" cy="27" r="6.57" fill="#cfeac0"/><circle cx="13" cy="27" r="6.57" fill="none" stroke="#4aa528" stroke-width="1.6"/><circle cx="13" cy="27" r="4.24" fill="#63b441"/><circle cx="13" cy="27" r="2.33" fill="#fff"/></svg>
<svg style="left:68px;top:1000px" width="42" height="40" viewBox="0 0 42 40"><path d="M14 4 H29 L38 13 V34 H14 Z" fill="#f6f6f6" stroke="#8b8b8b" stroke-width="1.8" stroke-linejoin="round"/><path d="M29 4 V13 H38 Z" fill="#d9d9d9" stroke="#8b8b8b" stroke-width="1.4" stroke-linejoin="round"/><path d="M18 9.5 H26 M18 13.5 H26 M24 18 H35 M24 22 H35 M26 26 H35 M26 30 H35" stroke="#9a9a9a" stroke-width="1.6"/><polygon points="23.57,27.81 23.07,30.30 20.38,30.74 19.28,32.38 19.90,35.05 17.79,36.46 15.57,34.86 13.63,35.24 12.19,37.57 9.70,37.07 9.26,34.38 7.62,33.28 4.95,33.90 3.54,31.79 5.14,29.57 4.76,27.63 2.43,26.19 2.93,23.70 5.62,23.26 6.72,21.62 6.10,18.95 8.21,17.54 10.43,19.14 12.37,18.76 13.81,16.43 16.30,16.93 16.74,19.62 18.38,20.72 21.05,20.10 22.46,22.21 20.86,24.43 21.24,26.37" fill="#5db13a"/><circle cx="13" cy="27" r="6.57" fill="#cfeac0"/><circle cx="13" cy="27" r="6.57" fill="none" stroke="#4aa528" stroke-width="1.6"/><circle cx="13" cy="27" r="4.24" fill="#63b441"/><circle cx="13" cy="27" r="2.33" fill="#fff"/></svg>
<svg style="left:68px;top:1064px" width="44" height="44" viewBox="0 0 44 44"><path d="M6 8 Q6 5 9 5 H16 L20 9 H32 L35 13 V28 H6 Z" fill="#e2e2e2" stroke="#8b8b8b" stroke-width="1.8" stroke-linejoin="round"/><path d="M10 13 H34 V28 H10 Z" fill="#f2f2f2" stroke="#8b8b8b" stroke-width="1.6" stroke-linejoin="round"/><polygon points="39.57,25.81 39.07,28.30 36.38,28.74 35.28,30.38 35.90,33.05 33.79,34.46 31.57,32.86 29.63,33.24 28.19,35.57 25.70,35.07 25.26,32.38 23.62,31.28 20.95,31.90 19.54,29.79 21.14,27.57 20.76,25.63 18.43,24.19 18.93,21.70 21.62,21.26 22.72,19.62 22.10,16.95 24.21,15.54 26.43,17.14 28.37,16.76 29.81,14.43 32.30,14.93 32.74,17.62 34.38,18.72 37.05,18.10 38.46,20.21 36.86,22.43 37.24,24.37" fill="#5db13a"/><circle cx="29" cy="25" r="6.57" fill="#cfeac0"/><circle cx="29" cy="25" r="6.57" fill="none" stroke="#4aa528" stroke-width="1.6"/><circle cx="29" cy="25" r="4.24" fill="#63b441"/><circle cx="29" cy="25" r="2.33" fill="#fff"/></svg>
</body></html>
